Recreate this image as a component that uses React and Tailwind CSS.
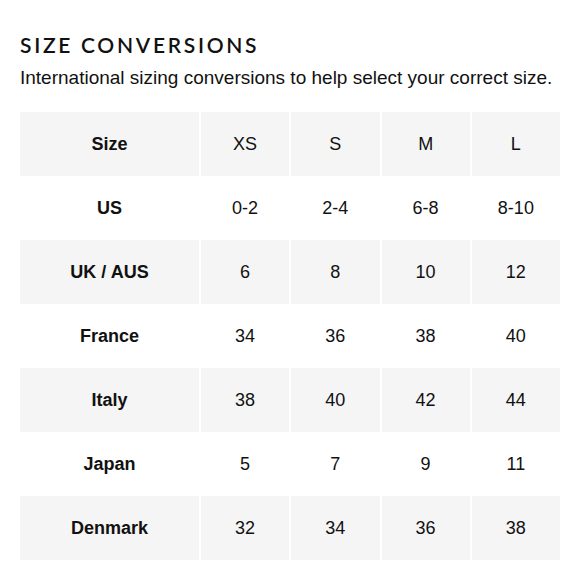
import React from 'react'

const sizes = ['XS', 'S', 'M', 'L']

const rows = [
  ['US', '0-2', '2-4', '6-8', '8-10'],
  ['UK / AUS', '6', '8', '10', '12'],
  ['France', '34', '36', '38', '40'],
  ['Italy', '38', '40', '42', '44'],
  ['Japan', '5', '7', '9', '11'],
  ['Denmark', '32', '34', '36', '38'],
]

const Row = ({ cells, shaded }) => (
  <div className="grid grid-cols-[179px_repeat(4,1fr)] gap-x-[2px] h-16">
    {cells.map((c, i) => (
      <div
        key={i}
        className={`flex items-center justify-center ${shaded ? 'bg-[#f5f5f5]' : 'bg-white'} ${i === 0 ? 'font-bold' : ''}`}
      >
        {c}
      </div>
    ))}
  </div>
)

export default function App() {
  return (
    <div className="w-[580px] h-[580px] bg-white text-[#111] font-['Liberation_Sans',Arial,sans-serif]">
      <div className="px-5 pt-[33px]">
        <h1 className="font-['Lato',sans-serif] text-[21px] font-semibold tracking-[2.7px] leading-6 text-[#111]">
          SIZE CONVERSIONS
        </h1>
        <p className="mt-[9px] text-[19px] leading-6 text-[#111]">
          International sizing conversions to help select your correct size.
        </p>
        <div className="mt-[22px] w-[540px] text-[18px]">
          <Row cells={['Size', ...sizes]} shaded />
          {rows.map((r, i) => (
            <Row key={r[0]} cells={r} shaded={i % 2 === 1} />
          ))}
        </div>
      </div>
    </div>
  )
}
